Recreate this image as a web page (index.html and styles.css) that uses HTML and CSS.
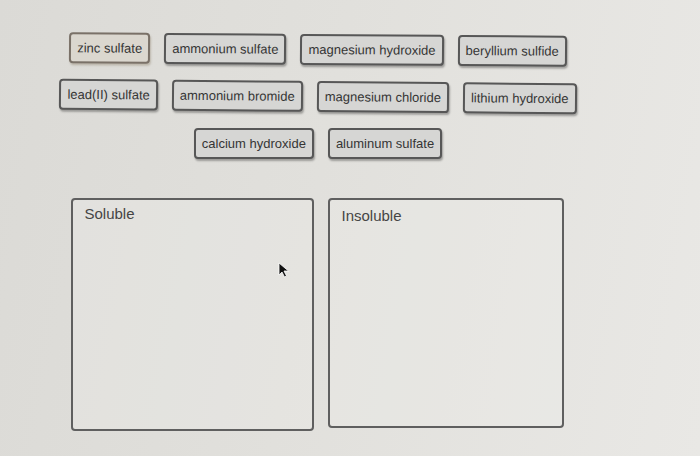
FILE: index.html
```html
<!DOCTYPE html>
<html>
	<head>
		<meta charset="UTF-8">
		<title>Solubility</title>
		<link rel="stylesheet" href="styles.css">
	</head>
	<body>
		<div id="board">
			<!--待分类的化合物-->
			<div class="chips">
				<div class="chip-row">
					<span class="chip picked">zinc sulfate</span>
					<span class="chip">ammonium sulfate</span>
					<span class="chip">magnesium hydroxide</span>
					<span class="chip">beryllium sulfide</span>
				</div>
				<div class="chip-row">
					<span class="chip">lead(II) sulfate</span>
					<span class="chip">ammonium bromide</span>
					<span class="chip">magnesium chloride</span>
					<span class="chip">lithium hydroxide</span>
				</div>
				<div class="chip-row">
					<span class="chip">calcium hydroxide</span>
					<span class="chip">aluminum sulfate</span>
				</div>
			</div>
			<!--拖放区域-->
			<div class="bins">
				<div class="bin soluble">
					<span class="bin-title">Soluble</span>
					<svg class="pointer" width="12" height="16" viewBox="0 0 12 16">
						<path d="M1 1 L1 13 L4 10 L6.5 15 L8.5 14 L6 9 L10.5 9 Z" fill="#111" stroke="#fff" stroke-width="0.8"/>
					</svg>
				</div>
				<div class="bin insoluble">
					<span class="bin-title">Insoluble</span>
				</div>
			</div>
		</div>
	</body>
</html>
```
FILE: styles.css
```css
*{
	margin: 0;
	padding: 0;
	box-sizing: border-box;
}
body{
	width: 700px;
	height: 456px;
	overflow: hidden;
	font-family: "Liberation Sans", Arial, sans-serif;
	color: #353535;
	background: linear-gradient(100deg, #dbdad6 0%, #e1e0dc 45%, #e9e8e5 100%);
}
#board{
	width: 520px;
	margin-left: 58px;
	padding-top: 34px;
}
.chips{
	display: flex;
	flex-direction: column;
	gap: 16px;
}
.chip-row{
	display: flex;
	justify-content: center;
	gap: 14px;
}
.chip-row:nth-child(1){
	transform: rotate(0.4deg);
}
.chip-row:nth-child(2){
	transform: rotate(0.5deg);
}
.chip{
	display: inline-block;
	height: 31px;
	line-height: 27px;
	padding: 0 6px;
	font-size: 13px;
	background: #d6d6d4;
	border: 2px solid #575757;
	border-radius: 4px;
	box-shadow: 1px 2px 2px rgba(0,0,0,.3);
	white-space: nowrap;
}
.chip.picked{
	background: #dbd7cf;
	border-color: #7a7168;
	box-shadow: 1px 2px 2px rgba(90,70,40,.25);
}
.bins{
	display: flex;
	justify-content: center;
	gap: 14px;
	margin-top: 39px;
	margin-left: -2px;
}
.bin{
	position: relative;
	height: 233px;
	background: rgba(238,237,234,.3);
	border: 2px solid #5f5f5f;
	border-radius: 4px;
	padding: 4px 12px;
}
.soluble{
	width: 243px;
}
.insoluble{
	width: 236px;
	height: 230px;
}
.bin-title{
	font-size: 15px;
	color: #454545;
	line-height: 20px;
}
.insoluble .bin-title{
	display: block;
	margin-top: 2px;
}
.pointer{
	position: absolute;
	left: 205px;
	top: 62px;
}
```
